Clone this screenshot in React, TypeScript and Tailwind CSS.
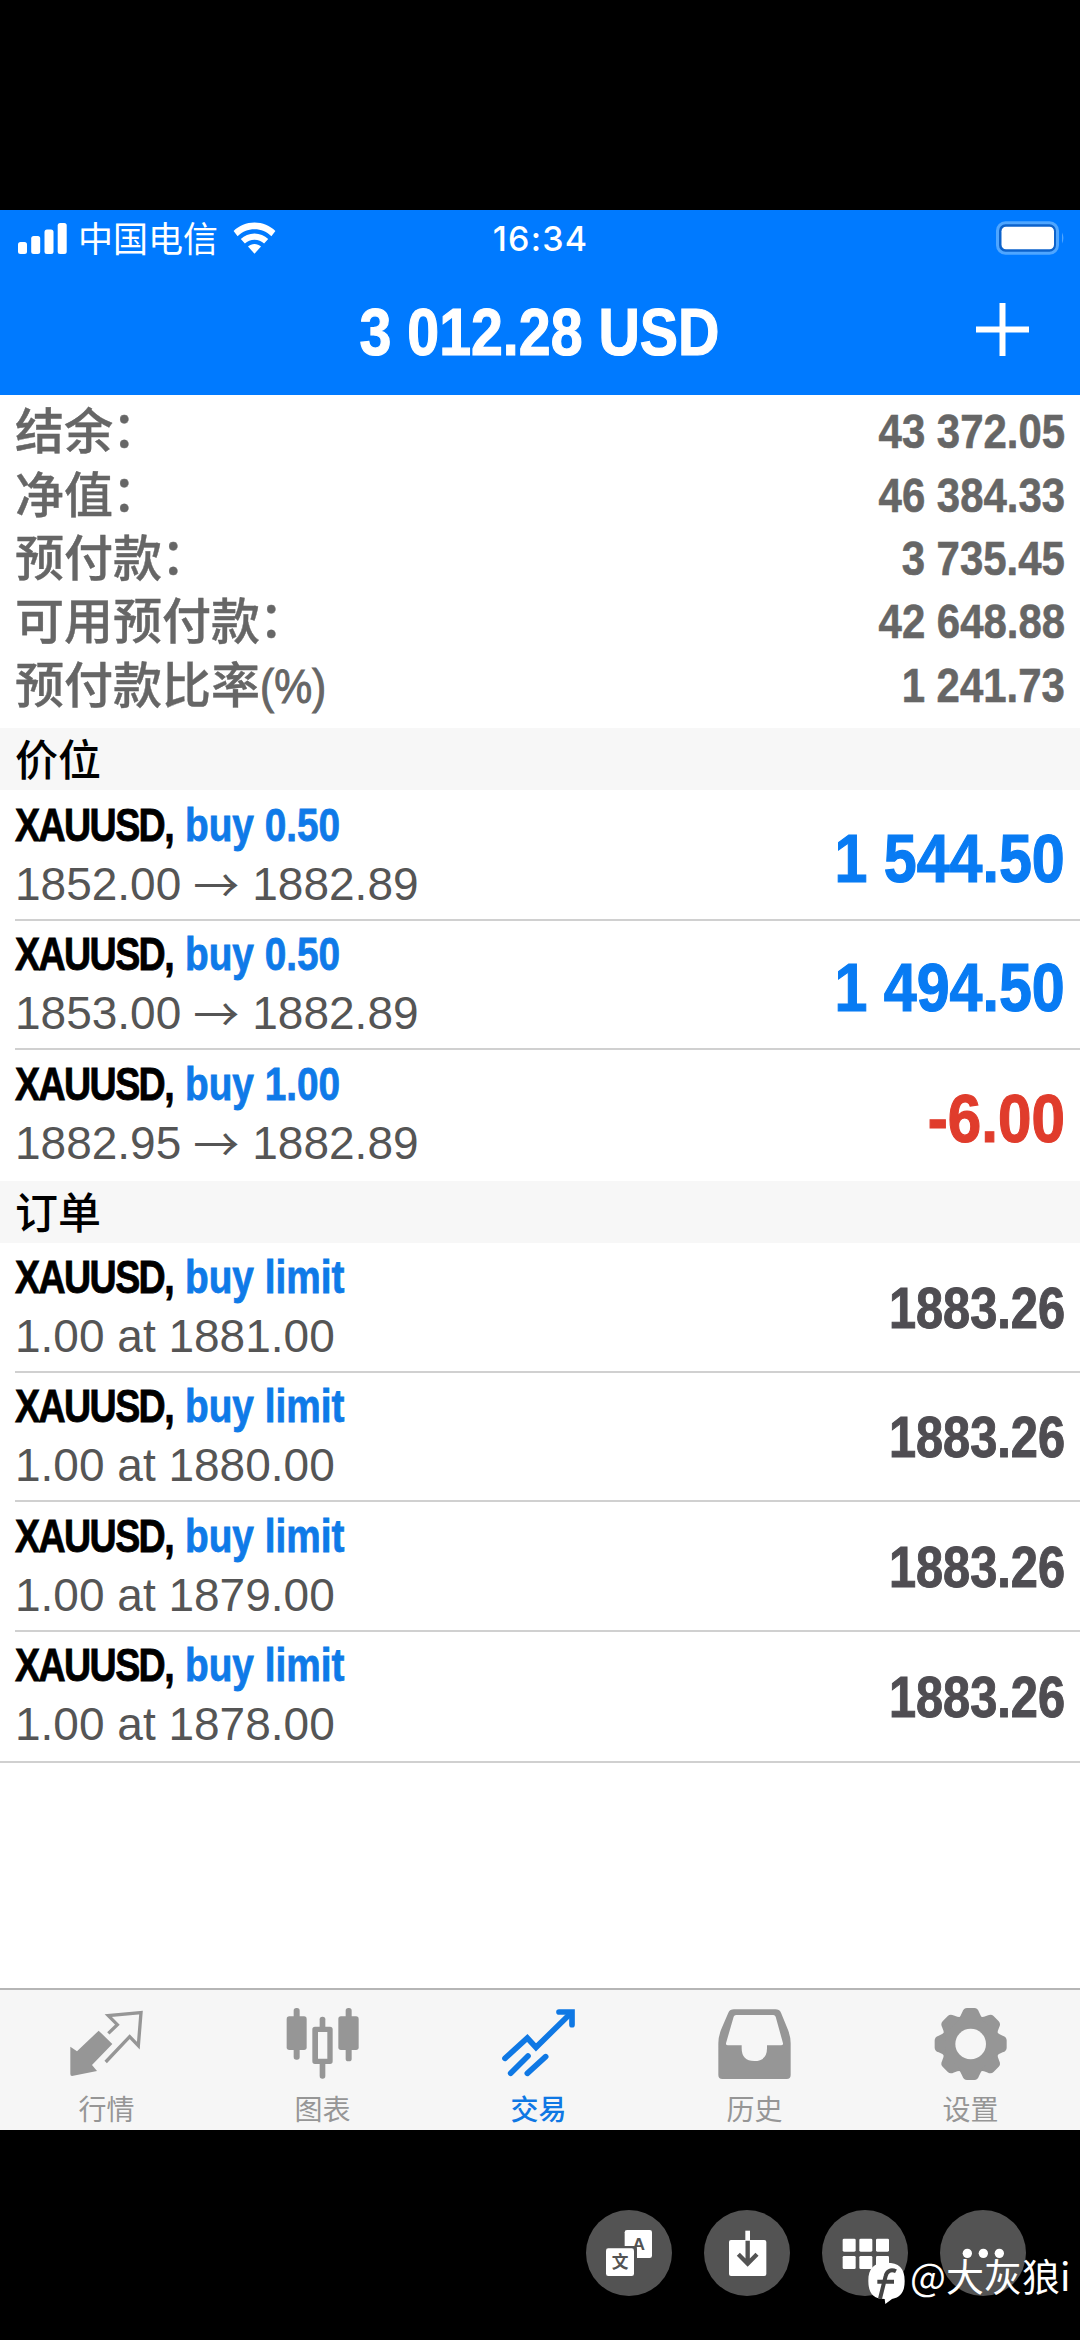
import type { ReactNode } from 'react'

const summary = [
  { label: '结余', suffix: '：', value: '43 372.05' },
  { label: '净值', suffix: '：', value: '46 384.33' },
  { label: '预付款', suffix: '：', value: '3 735.45' },
  { label: '可用预付款', suffix: '：', value: '42 648.88' },
  { label: '预付款比率', suffix: '(%)', value: '1 241.73' },
]

const positions = [
  { volume: '0.50', open: '1852.00', current: '1882.89', profit: '1 544.50' },
  { volume: '0.50', open: '1853.00', current: '1882.89', profit: '1 494.50' },
  { volume: '1.00', open: '1882.95', current: '1882.89', profit: '-6.00' },
]

const orders = [
  { price: '1881.00', current: '1883.26' },
  { price: '1880.00', current: '1883.26' },
  { price: '1879.00', current: '1883.26' },
  { price: '1878.00', current: '1883.26' },
]

function StatusBar() {
  return (
    <div className="flex h-[58px] items-center justify-between pr-[15px] pl-[18px] text-white">
      <div className="flex w-[400px] items-center">
        <svg className="mb-0.5" width="49" height="31" viewBox="0 0 49 31" fill="currentColor">
          <rect x="0" y="19" width="9" height="12" rx="2.5" />
          <rect x="13.2" y="13" width="9" height="18" rx="2.5" />
          <rect x="26.5" y="6.5" width="9" height="24.5" rx="2.5" />
          <rect x="39.7" y="0" width="9" height="31" rx="2.5" />
        </svg>
        <span className="ml-[11px] pt-0.5 text-[35px] leading-[58px]">中国电信</span>
        <svg className="mb-0.5 ml-[15px]" width="43" height="32" viewBox="0 0 43 32" fill="currentColor">
          <path d="M21.5 0.5C29.6 0.5 37 3.7 42.4 9L38.4 14.3C34 9.9 28 7.3 21.5 7.3S9 9.9 4.6 14.3L0.6 9C6 3.7 13.4 0.5 21.5 0.5Z" />
          <path d="M21.5 11.5C26.8 11.5 31.6 13.6 35.2 17L31.1 21.6C28.6 19.3 25.2 17.8 21.5 17.8S14.4 19.3 11.9 21.6L7.8 17C11.4 13.6 16.2 11.5 21.5 11.5Z" />
          <path d="M21.5 22C24 22 26.2 22.9 28 24.4L21.5 31.7L15 24.4C16.8 22.9 19 22 21.5 22Z" />
        </svg>
      </div>
      <span className="pr-0.5 font-[Inter] text-[34px] leading-[58px] font-medium tracking-[1.2px]">16:34</span>
      <div className="flex w-[400px] justify-end">
        <svg className="mb-0.5" width="70" height="34" viewBox="0 0 70 34">
          <rect x="2.5" y="1.8" width="60" height="30.4" rx="8" fill="#0b62cc" stroke="#4fa6ff" strokeWidth="3" />
          <rect x="6.5" y="5.8" width="52.5" height="22.4" rx="4.5" fill="#fff" />
          <path d="M67 11.5Q69.8 17 67 22.5Z" fill="#4fa6ff" />
        </svg>
      </div>
    </div>
  )
}

function Header() {
  return (
    <div className="flex h-[126px] items-center justify-between pb-1">
      <div className="w-[102px]" />
      <h1 className="scale-x-[0.855] pt-[5px] text-[67px] leading-none font-bold whitespace-nowrap text-white [-webkit-text-stroke:1.2px]">
        3 012.28 USD
      </h1>
      <svg className="mr-[51px]" width="53" height="53" viewBox="0 0 53 53" fill="#fff">
        <path d="M23.5 0h6v23.5H53v6H29.5V53h-6V29.5H0v-6h23.5Z" />
      </svg>
    </div>
  )
}

function SummaryRow({ label, suffix, value }: { label: string; suffix: string; value: string }) {
  return (
    <div className="flex h-[63.4px] items-center justify-between text-[49px] leading-none text-[#666]">
      <span className="pt-[3px] font-medium whitespace-nowrap [-webkit-text-stroke:0.4px]">
        {label}
        <span
          className={`inline-block ${
            suffix === '：'
              ? '-translate-x-px -translate-y-0.5'
              : 'origin-left scale-x-[0.87] [-webkit-text-stroke:1px]'
          }`}
        >
          {suffix}
        </span>
      </span>
      <span className="origin-right scale-x-[0.855] pt-px text-[49px] font-bold [-webkit-text-stroke:0.6px]">
        {value}
      </span>
    </div>
  )
}

function SectionTitle({ children }: { children: ReactNode }) {
  return (
    <h2 className="h-[62px] bg-[#f7f7f7] pl-[15px] text-[43px] leading-[67px] font-medium text-black">
      {children}
    </h2>
  )
}

interface TradeRowProps {
  action: string
  detail: ReactNode
  value: string
  valueClass: string
  last?: boolean
}

function TradeRow({ action, detail, value, valueClass, last }: TradeRowProps) {
  return (
    <div
      className={`ml-[15px] flex h-[129.5px] items-center justify-between pr-[15px] ${
        last ? '' : 'border-b-2 border-[#d0d0d0]'
      }`}
    >
      <div className="flex h-full flex-col pt-1">
        <div className="flex h-[58px] items-center text-[47px] leading-none font-bold whitespace-nowrap [-webkit-text-stroke:0.8px]">
          <span className="w-[170px] origin-left scale-x-[0.8] tracking-[-2px] text-black">XAUUSD,</span>
          <span className="origin-left scale-x-[0.825] text-[#0f7ae8]">{action}</span>
        </div>
        <div className="flex h-[60px] items-center pt-px text-[46px] leading-none whitespace-nowrap text-[#555]">
          {detail}
        </div>
      </div>
      <span className={`origin-right font-bold whitespace-nowrap ${valueClass}`}>{value}</span>
    </div>
  )
}

function Tab({ label, active, children }: { label: string; active?: boolean; children: ReactNode }) {
  return (
    <div
      className={`flex flex-1 flex-col items-center pt-4 ${active ? 'text-[#0f78e4]' : 'text-[#969696]'}`}
    >
      {children}
      <span className={`mt-[13px] pr-[3px] text-[28px] leading-8 ${active ? 'font-medium' : ''}`}>{label}</span>
    </div>
  )
}

function TabBar() {
  return (
    <nav className="flex h-[142px] border-t-2 border-[#b5b5b5] bg-[#f6f6f6]">
      <Tab label="行情">
        <svg width="76" height="76" viewBox="210 78 228 228" fill="currentColor">
          <path d="M296 152L337 192L276 255L291 273L216 288Q211 288 211 282V200L231 214Z" />
          <path
            d="M325 160L352 134L325 107L423 98L415 197L389 170L317 246"
            fill="none"
            stroke="currentColor"
            strokeWidth="10"
          />
        </svg>
      </Tab>
      <Tab label="图表">
        <svg width="76" height="76" viewBox="858 78 228 228" fill="currentColor">
          <rect x="881" y="84" width="18" height="155" rx="8" />
          <rect x="860" y="109" width="60" height="101" rx="8" />
          <rect x="1037" y="84" width="18" height="160" rx="8" />
          <rect x="1015" y="109" width="61" height="101" rx="8" />
          <rect x="959" y="110" width="17" height="40" rx="8" />
          <rect x="959" y="240" width="17" height="56" rx="8" />
          <path
            fillRule="evenodd"
            d="M945 140h45q8 0 8 8v96q0 8-8 8h-45q-8 0-8-8v-96q0-8 8-8ZM954 156v80h28v-80Z"
          />
        </svg>
      </Tab>
      <Tab label="交易" active>
        <svg
          width="76"
          height="76"
          viewBox="306 78 228 228"
          fill="none"
          stroke="currentColor"
          strokeWidth="17"
          strokeLinecap="round"
        >
          <path d="M315 235L382 174L408 202L510 102" strokeLinejoin="miter" />
          <path d="M477 96H516V134" />
          <path d="M332 280L384 228M382 280L437 230" />
        </svg>
      </Tab>
      <Tab label="历史">
        <svg width="76" height="76" viewBox="954 78 228 228" fill="currentColor">
          <path
            fillRule="evenodd"
            d="M1002 88H1126Q1138 88 1143 98L1162 145Q1172 168 1172 190V285Q1172 297 1160 297H967Q955 297 955 285V190Q955 168 965 145L985 98Q990 88 1002 88ZM1008 105Q1003 105 1001 110L978 190Q977 196 984 196H1025V205Q1025 243 1063 243T1101 205V196H1143Q1150 196 1149 190L1127 110Q1125 105 1120 105Z"
          />
        </svg>
      </Tab>
      <Tab label="设置">
        <svg width="76" height="76" viewBox="462 78 228 228">
          <g fill="currentColor">
            <circle cx="572" cy="192" r="86" />
            {[0, 45, 90, 135, 180, 225, 270, 315].map((deg) => (
              <path
                key={deg}
                transform={`rotate(${deg} 572 192)`}
                d="M534 116Q543 108 547 96Q551 84 561 84H583Q593 84 597 96Q601 108 610 116Z"
              />
            ))}
          </g>
          <circle cx="572" cy="192" r="46" fill="#f6f6f6" />
        </svg>
      </Tab>
    </nav>
  )
}

function RoundButton({ children }: { children: ReactNode }) {
  return (
    <button className="size-[86px] rounded-full bg-[#535353]">
      <svg width="86" height="86" viewBox="48 90 258 258" fill="#fff">
        {children}
      </svg>
    </button>
  )
}

function ViewerActions() {
  return (
    <div className="relative flex h-[210px] gap-8 pt-20 pl-[586px]">
      <RoundButton>
        <rect x="164" y="150" width="82" height="84" rx="7" />
        <text x="206" y="210" fontSize="52" fontWeight="700" textAnchor="middle" fill="#535353">
          A
        </text>
        <rect x="104" y="198" width="97" height="94" rx="8" fill="#535353" />
        <rect x="108" y="205" width="84" height="83" rx="7" />
        <text x="150" y="265" fontSize="50" fontWeight="700" textAnchor="middle" fill="#535353">
          文
        </text>
      </RoundButton>
      <RoundButton>
        <rect x="123" y="180" width="112" height="108" rx="6" />
        <rect x="172" y="152" width="14" height="28" />
        <path d="M179 182V252M151 223L179 251L207 223" fill="none" stroke="#535353" strokeWidth="13" />
      </RoundButton>
      <RoundButton>
        {[110, 160, 210].map((x) => (
          <g key={x}>
            <rect x={x} y="176" width="39" height="39" rx="4" />
            <rect x={x} y="228" width="39" height="39" rx="4" />
          </g>
        ))}
      </RoundButton>
      <RoundButton>
        <circle cx="130" cy="220" r="14" />
        <circle cx="178" cy="220" r="14" />
        <circle cx="226" cy="220" r="14" />
      </RoundButton>
      <div className="absolute top-[130px] left-[868px] flex items-start text-white">
        <svg width="38" height="44" viewBox="0 0 114 132">
          <path
            d="M56 8C92 8 110 24 110 63C110 96 98 112 72 117L52 132L50 117C16 117 1 100 1 63C1 24 18 8 56 8Z"
            fill="#fff"
          />
          <path
            d="M84 34C68 26 56 34 53 48L36 116M28 65H78"
            fill="none"
            stroke="#444"
            strokeWidth="12"
          />
        </svg>
        <span className="-mt-[7px] ml-1 font-['Noto_Sans_CJK_SC',sans-serif] text-[38px] leading-[44px] font-normal whitespace-nowrap">
          @大灰狼i
        </span>
      </div>
    </div>
  )
}

export default function App() {
  return (
    <div className="flex h-[2340px] w-[1080px] flex-col overflow-hidden bg-black font-['Liberation_Sans','Noto_Sans_CJK_SC',sans-serif]">
      <div className="h-[210px] shrink-0" />
      <header className="h-[184.5px] shrink-0 bg-[#007aff]">
        <StatusBar />
        <Header />
      </header>
      <main className="flex-1 bg-white">
        <section className="h-[333.5px] pt-[5px] pr-[15px] pl-[15px]">
          {summary.map((row) => (
            <SummaryRow key={row.label} {...row} />
          ))}
        </section>
        <SectionTitle>价位</SectionTitle>
        <div className="h-[391px] pt-px">
          {positions.map((p, i) => (
            <TradeRow
              key={p.open}
              action={`buy ${p.volume}`}
              detail={
                <>
                  {p.open}
                  <span className="mr-[13px] ml-3 -translate-y-0.5 font-['Noto_Sans_CJK_SC']">→</span>
                  {p.current}
                </>
              }
              value={p.profit}
              valueClass={
                p.profit.startsWith('-')
                  ? 'pt-1.5 scale-x-[0.885] text-[68px] text-[#e03c2c] [-webkit-text-stroke:1.2px]'
                  : 'pt-1.5 scale-x-[0.87] text-[68px] text-[#087bf3] [-webkit-text-stroke:1.2px]'
              }
              last={i === positions.length - 1}
            />
          ))}
        </div>
        <SectionTitle>订单</SectionTitle>
        <div className="border-b-2 border-[#d0d0d0]">
          {orders.map((o, i) => (
            <TradeRow
              key={o.price}
              action="buy limit"
              detail={`1.00 at ${o.price}`}
              value={o.current}
              valueClass="pt-[3px] scale-x-[0.855] text-[57px] text-[#4f4d52] [-webkit-text-stroke:1px]"
              last={i === orders.length - 1}
            />
          ))}
        </div>
      </main>
      <TabBar />
      <ViewerActions />
    </div>
  )
}
